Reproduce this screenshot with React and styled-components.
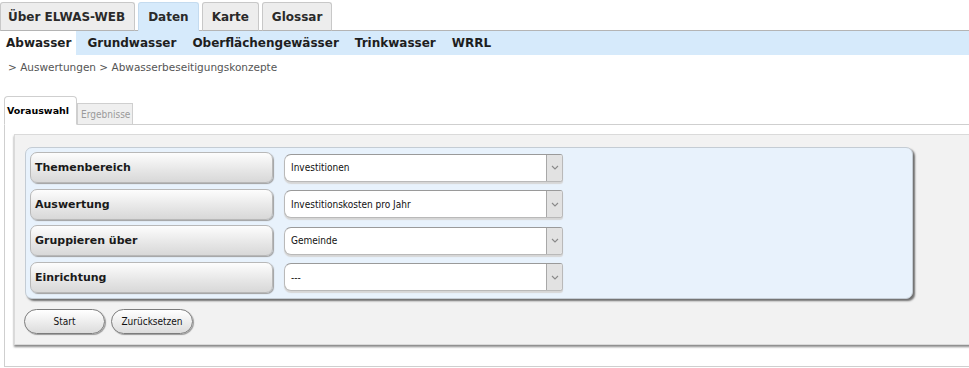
import React from 'react';
import styled, {createGlobalStyle} from 'styled-components';

const GlobalStyle = createGlobalStyle`
  html, body {
    margin: 0;
    padding: 0;
    background: #fff;
    overflow: hidden;
  }
  body {
    font-family: "DejaVu Sans", Verdana, sans-serif;
    color: #000;
  }
`;

const TopTabs = styled.div`
  display: flex;
  gap: 3px;
  padding-top: 2px;
  border-bottom: 1px solid #b4b4b4;
`;

const TopTab = styled.div`
  height: 27px;
  padding: 0 9px 0 ${p => (p.$first ? '7px' : '9px')};
  display: flex;
  align-items: center;
  margin-bottom: -1px;
  font-size: 12px;
  font-weight: bold;
  color: #2a2a2a;
  background: ${p => (p.$active ? '#d6eafb' : '#ededed')};
  border: 1px solid ${p => (p.$active ? '#c4dbef' : '#c8c8c8')};
  border-bottom: 1px solid ${p => (p.$active ? '#d6eafb' : '#b4b4b4')};
  border-radius: 3px 3px 0 0;
`;

const SubNav = styled.div`
  display: flex;
  gap: 5px;
  height: 24px;
  background: #d6eafb;
`;

const SubLink = styled.div`
  display: flex;
  align-items: center;
  padding: 0 5px 0 6px;
  font-size: 12px;
  font-weight: bold;
  color: #1e1e1e;
  background: ${p => (p.$active ? '#fff' : 'transparent')};
`;

const Breadcrumb = styled.div`
  margin: 5px 0 0 8px;
  height: 14px;
  line-height: 14px;
  font-size: 10.5px;
  color: #555;
`;

const Content = styled.div`
  margin: 23px -40px 0 4px;
`;

const PanelTabs = styled.div`
  display: flex;
  align-items: flex-end;
  height: 28px;
  margin-bottom: -1px;
  position: relative;
  z-index: 1;
`;

const PanelTab = styled.div`
  display: flex;
  align-items: center;
  height: ${p => (p.$active ? '27px' : '20px')};
  padding: ${p => (p.$active ? '0 7px 0 2px' : '0 2px 0 3px')};
  font-family: ${p => (p.$active ? '"DejaVu Sans"' : '"DejaVu Sans Condensed", "DejaVu Sans"')}, sans-serif;
  font-size: ${p => (p.$active ? '9.5px' : '10px')};
  font-weight: ${p => (p.$active ? 'bold' : 'normal')};
  color: ${p => (p.$active ? '#000' : '#9a9a9a')};
  background: ${p => (p.$active ? '#fff' : '#efefef')};
  border: 1px solid #cfcfcf;
  border-bottom: 1px solid ${p => (p.$active ? '#fff' : '#cfcfcf')};
  border-radius: ${p => (p.$active ? '4px 4px 0 0' : '0')};
`;

const TabBody = styled.div`
  border: 1px solid #cfcfcf;
  padding: 9px 0 21px 9px;
  background: #fff;
`;

const FormPanel = styled.div`
  background: #f2f2f2;
  border: 1px solid #dadada;
  border-right: none;
  box-shadow: 0 2px 2px #8a8a8a;
  padding: 12px 0 10px 9px;
`;

const Fields = styled.div`
  width: 876px;
  margin-left: 1px;
  padding: 4px 6px 5px 4px;
  background: #e8f2fc;
  border: 1px solid #c4ccd4;
  border-radius: 7px;
  box-shadow: 2px 2px 2px #6e6e6e;
  display: flex;
  flex-direction: column;
  gap: 5.5px;
`;

const Row = styled.div`
  display: flex;
  align-items: center;
  gap: 11px;
`;

const Label = styled.div`
  width: 237px;
  height: 29px;
  padding-left: 4px;
  display: flex;
  align-items: center;
  font-size: 11px;
  font-weight: bold;
  color: #1a1a1a;
  background: linear-gradient(#fdfdfd, #e6e6e6 60%, #d8d8d8);
  border: 1px solid #b8b8b8;
  border-radius: 7px;
  box-shadow: 1px 1px 1px #a0a0a0;
`;

const Select = styled.div`
  width: 277px;
  height: 26px;
  display: flex;
  align-items: stretch;
  background: #fff;
  border: 1px solid #b9b9b9;
  border-top-color: #9a9a9a;
  border-radius: 7px 3px 3px 7px;
  box-shadow: 0 2px 1px #d6d6d6;
  overflow: hidden;
`;

const SelectValue = styled.div`
  flex: 1;
  display: flex;
  align-items: center;
  padding-left: 6px;
  font-family: "DejaVu Sans Condensed", "DejaVu Sans", sans-serif;
  font-size: 10px;
  color: #111;
`;

const Arrow = styled.div`
  width: 15px;
  display: flex;
  align-items: center;
  justify-content: center;
  background: #e2e2e2;
  border-left: 1px solid #a8a8a8;
`;

const Buttons = styled.div`
  display: flex;
  gap: 6px;
  margin-top: 10px;
`;

const PillButton = styled.button`
  width: ${p => p.$width}px;
  height: 25px;
  padding: 0;
  font-family: "DejaVu Sans Condensed", "DejaVu Sans", sans-serif;
  font-size: 10px;
  color: #111;
  background: linear-gradient(#ffffff, #ececec 55%, #dcdcdc);
  border: 1px solid #7c7c7c;
  border-radius: 13px;
  box-shadow: 1px 1px 1px #9a9a9a;
`;

const Chevron = () => (
  <svg width="8" height="5" viewBox="0 0 8 5">
    <path d="M1 1 L4 4 L7 1" fill="none" stroke="#8a8a8a" strokeWidth="1.1" />
  </svg>
);

const fields = [
  {label: 'Themenbereich', value: 'Investitionen'},
  {label: 'Auswertung', value: 'Investitionskosten pro Jahr'},
  {label: 'Gruppieren über', value: 'Gemeinde'},
  {label: 'Einrichtung', value: '---'},
];

export default function App() {
  return (
    <>
      <GlobalStyle />
      <TopTabs>
        <TopTab $first>Über ELWAS-WEB</TopTab>
        <TopTab $active>Daten</TopTab>
        <TopTab>Karte</TopTab>
        <TopTab>Glossar</TopTab>
      </TopTabs>
      <SubNav>
        <SubLink $active>Abwasser</SubLink>
        <SubLink>Grundwasser</SubLink>
        <SubLink>Oberflächengewässer</SubLink>
        <SubLink>Trinkwasser</SubLink>
        <SubLink>WRRL</SubLink>
      </SubNav>
      <Breadcrumb>&gt; Auswertungen &gt; Abwasserbeseitigungskonzepte</Breadcrumb>
      <Content>
        <PanelTabs>
          <PanelTab $active>Vorauswahl</PanelTab>
          <PanelTab>Ergebnisse</PanelTab>
        </PanelTabs>
        <TabBody>
          <FormPanel>
            <Fields>
              {fields.map(f => (
                <Row key={f.label}>
                  <Label>{f.label}</Label>
                  <Select>
                    <SelectValue>{f.value}</SelectValue>
                    <Arrow><Chevron /></Arrow>
                  </Select>
                </Row>
              ))}
            </Fields>
            <Buttons>
              <PillButton $width={81}>Start</PillButton>
              <PillButton $width={82}>Zurücksetzen</PillButton>
            </Buttons>
          </FormPanel>
        </TabBody>
      </Content>
    </>
  );
}
